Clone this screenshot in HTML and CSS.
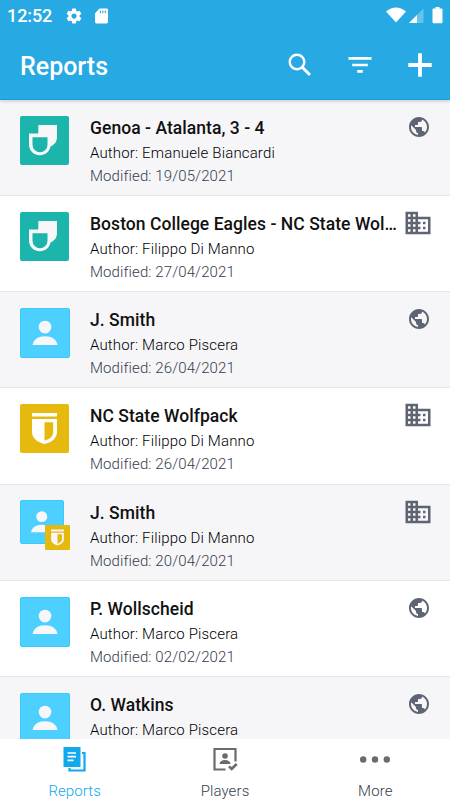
FILE: index.html
```html
<!DOCTYPE html>
<html lang="en">
<head>
    <meta charset="UTF-8">
    <meta name="viewport" content="width=device-width, initial-scale=1.0">
    <title>Reports</title>
    <link rel="stylesheet" href="styles.css">
</head>
<body>
    <!-- shared icons -->
    <svg class="sprite">
        <symbol id="team" viewBox="0 0 49 49">
            <path fill="currentColor" d="M18.300 9H37V21c0 4.500-2 7.500-6.500 9.500-1 5-5 8.700-10.700 8.700C13.500 39.200 9 34.500 9 28.500V17.500h9.300z"/>
            <path fill="#1bb5ab" d="M12.500 21.200H27.500v7.500a7.500 7.500 0 0 1-15 0z"/>
        </symbol>
        <symbol id="person" viewBox="0 0 50 50">
            <circle cx="25" cy="18.800" r="6.600" fill="currentColor"/>
            <path fill="currentColor" d="M12 37.500c1-5.500 6-9 13-9s12 3.500 13 9z"/>
        </symbol>
        <symbol id="shield" viewBox="0 0 49 49">
            <path fill="currentColor" d="M12 9h25v3.500H12zM12 15h25v13c0 6-5.500 10.500-12.500 12C17.500 38.500 12 34 12 28z"/>
            <path fill="#e6b90f" d="M24.500 18.200h8.700V28c0 4.300-3.500 7.300-8.700 8.700z"/>
        </symbol>
        <symbol id="globe" viewBox="0 0 24 24">
            <path fill="currentColor" d="M12 2C6.480 2 2 6.480 2 12s4.480 10 10 10 10-4.480 10-10S17.520 2 12 2zm-1 17.930c-3.950-.49-7-3.850-7-7.930 0-.62.080-1.210.21-1.790L9 15v1c0 1.100.9 2 2 2v1.930zm6.900-2.540c-.26-.81-1-1.390-1.900-1.390h-1v-3c0-.55-.45-1-1-1H8v-2h2c.55 0 1-.45 1-1V7h2c1.100 0 2-.9 2-2v-.41c2.930 1.190 5 4.060 5 7.410 0 2.080-.8 3.970-2.100 5.390z"/>
        </symbol>
        <symbol id="company" viewBox="0 0 24 24">
            <path fill="currentColor" d="M12 7V3H2v18h20V7H12zM6 19H4v-2h2v2zm0-4H4v-2h2v2zm0-4H4V9h2v2zm0-4H4V5h2v2zm4 12H8v-2h2v2zm0-4H8v-2h2v2zm0-4H8V9h2v2zm0-4H8V5h2v2zm10 12h-8v-2h2v-2h-2v-2h2v-2h-2V9h8v10zm-2-8h-2v2h2v-2zm0 4h-2v2h2v-2z"/>
        </symbol>
    </svg>

    <div class="app">
        <header class="header">
            <div class="status">
                <span class="time">12:52</span>
                <svg class="gear" viewBox="0 0 24 24"><path fill="#fff" d="M19.430 12.980c.04-.32.070-.64.070-.98s-.03-.66-.07-.98l2.110-1.650c.19-.15.240-.42.120-.64l-2-3.460c-.12-.22-.39-.3-.61-.22l-2.490 1c-.52-.4-1.080-.73-1.690-.98l-.38-2.650C14.460 2.180 14.250 2 14 2h-4c-.25 0-.46.180-.49.420l-.38 2.650c-.61.250-1.170.590-1.690.98l-2.490-1c-.23-.09-.49 0-.61.220l-2 3.460c-.13.220-.07.490.12.640l2.110 1.650c-.04.320-.07.650-.07.980s.03.660.070.980l-2.110 1.650c-.19.150-.24.420-.12.640l2 3.460c.12.220.390.300.610.220l2.490-1c.52.400 1.080.730 1.690.980l.38 2.650c.03.240.240.420.490.420h4c.25 0 .46-.18.490-.42l.38-2.650c.61-.25 1.170-.59 1.690-.98l2.490 1c.23.090.490 0 .61-.22l2-3.460c.12-.22.070-.49-.12-.64l-2.110-1.650zM12 15.500c-1.930 0-3.500-1.570-3.500-3.500s1.570-3.500 3.500-3.500 3.500 1.570 3.500 3.500-1.570 3.500-3.500 3.500z"/></svg>
                <svg class="sd" viewBox="0 0 14 16"><path fill="#fff" d="M5 0h7.500Q14 0 14 1.500v13q0 1.500-1.500 1.500h-11Q0 16 0 14.500V5z"/><path stroke="#27a9e3" stroke-width="1.200" d="M5.700 2v3M8.400 2v3M11.100 2v3"/></svg>
                <svg class="signals" viewBox="0 0 57 17">
                    <path fill="#fff" d="M0 4.500Q10 -3.500 20 4.500L10 15.500z"/>
                    <path fill="#fff" opacity=".3" d="M37.500 1.500V16H23z"/>
                    <path fill="#fff" d="M31 8v8h-8z"/>
                    <path fill="#fff" d="M49.500 0h4v1.500h2q1 0 1 1V15q0 1.300-1 1.300h-8q-1 0-1-1.300V2.500q0-1 1-1h2z"/>
                </svg>
            </div>
            <div class="toolbar">
                <h1>Reports</h1>
                <svg class="tool" viewBox="0 0 30 30"><circle cx="12" cy="12" r="7.300" fill="none" stroke="#fff" stroke-width="2.400"/><path stroke="#fff" stroke-width="3" d="M17 17l8 8"/></svg>
                <svg class="tool" viewBox="0 0 30 30"><path fill="#fff" d="M3.500 7h23v2.700h-23zM7.200 13.700h15.600v2.600H7.200zM12.200 20h5.600v2.700h-5.600z"/></svg>
                <svg class="tool" viewBox="0 0 30 30"><path stroke="#fff" stroke-width="3.800" d="M15 3.300v23.400M3.300 15h23.400"/></svg>
            </div>
        </header>

        <main class="list">
            <div class="row">
                <div class="avatar team"><svg><use href="#team"/></svg></div>
                <div class="info">
                    <h2>Genoa - Atalanta, 3 - 4</h2>
                    <p>Author: Emanuele Biancardi</p>
                    <p class="date">Modified: 19/05/2021</p>
                </div>
                <svg class="scope globe"><use href="#globe"/></svg>
            </div>
            <div class="row">
                <div class="avatar team"><svg><use href="#team"/></svg></div>
                <div class="info">
                    <h2>Boston College Eagles - NC State Wol…</h2>
                    <p>Author: Filippo Di Manno</p>
                    <p class="date">Modified: 27/04/2021</p>
                </div>
                <svg class="scope company"><use href="#company"/></svg>
            </div>
            <div class="row">
                <div class="avatar player"><svg><use href="#person"/></svg></div>
                <div class="info">
                    <h2>J. Smith</h2>
                    <p>Author: Marco Piscera</p>
                    <p class="date">Modified: 26/04/2021</p>
                </div>
                <svg class="scope globe"><use href="#globe"/></svg>
            </div>
            <div class="row">
                <div class="avatar club"><svg><use href="#shield"/></svg></div>
                <div class="info">
                    <h2>NC State Wolfpack</h2>
                    <p>Author: Filippo Di Manno</p>
                    <p class="date">Modified: 26/04/2021</p>
                </div>
                <svg class="scope company"><use href="#company"/></svg>
            </div>
            <div class="row">
                <div class="avatar player small">
                    <svg><use href="#person"/></svg>
                    <div class="badge"><svg><use href="#shield"/></svg></div>
                </div>
                <div class="info">
                    <h2>J. Smith</h2>
                    <p>Author: Filippo Di Manno</p>
                    <p class="date">Modified: 20/04/2021</p>
                </div>
                <svg class="scope company"><use href="#company"/></svg>
            </div>
            <div class="row">
                <div class="avatar player"><svg><use href="#person"/></svg></div>
                <div class="info">
                    <h2>P. Wollscheid</h2>
                    <p>Author: Marco Piscera</p>
                    <p class="date">Modified: 02/02/2021</p>
                </div>
                <svg class="scope globe"><use href="#globe"/></svg>
            </div>
            <div class="row">
                <div class="avatar player"><svg><use href="#person"/></svg></div>
                <div class="info">
                    <h2>O. Watkins</h2>
                    <p>Author: Marco Piscera</p>
                </div>
                <svg class="scope globe"><use href="#globe"/></svg>
            </div>
        </main>

        <nav class="tabs">
            <a class="tab active">
                <svg viewBox="0 0 30 30"><path fill="currentColor" d="M3.500 3H20.500v20H3.500z"/><path fill="none" stroke="currentColor" stroke-width="2.200" d="M22 9h2.500v17.500H9.500V24"/><path stroke="#fff" stroke-width="1.700" d="M7.500 9h8.500M7.500 12.700h8.500M7.500 16.400h6"/></svg>
                <span>Reports</span>
            </a>
            <a class="tab">
                <svg viewBox="0 0 30 30"><path fill="none" stroke="currentColor" stroke-width="2.200" d="M15.500 25.500H4.500V5h21v12.500"/><path fill="none" stroke="currentColor" stroke-width="2.600" d="M19 22.300l2.700 2.700 5-5"/><circle cx="15" cy="12" r="2.800" fill="currentColor"/><path fill="currentColor" d="M9.500 20c.5-3 2.500-4 5.500-4s5 1 5.500 4z"/></svg>
                <span>Players</span>
            </a>
            <a class="tab">
                <svg viewBox="0 0 30 30"><g fill="currentColor"><circle cx="3.200" cy="15.500" r="3.200"/><circle cx="15" cy="15.500" r="3.200"/><circle cx="26.800" cy="15.500" r="3.200"/></g></svg>
                <span>More</span>
            </a>
        </nav>
    </div>
</body>
</html>
```
FILE: styles.css
```css
* {
    box-sizing: border-box;
}

body {
    margin: 0;
    font-family: Roboto, sans-serif;
    background: #fff;
}

h1, h2, p {
    margin: 0;
}

svg {
    display: block;
    flex: none;
}

.sprite {
    display: none;
}

.app {
    height: 800px;
    display: flex;
    flex-direction: column;
    overflow: hidden;
}

.header {
    flex: none;
    height: 99.500px;
    background: #27a9e3;
    border-bottom: 1px solid #159fd6;
    color: #fff;
    box-shadow: 0 1px 4px rgba(0, 0, 0, 0.2);
    z-index: 1;
}

.status {
    display: flex;
    align-items: center;
    height: 31px;
    padding: 0 8px 0 7px;
}

.time {
    width: 58px;
    font-size: 18px;
    font-weight: 500;
    letter-spacing: -0.1px;
}

.gear {
    width: 18px;
    height: 18px;
}

.sd {
    width: 13px;
    height: 16px;
    margin-left: 12px;
}

.signals {
    width: 57px;
    height: 17px;
    margin-left: auto;
    margin-right: -1px;
}

.toolbar {
    display: flex;
    align-items: center;
    gap: 30px;
    height: 68px;
    padding: 0 15px 0 20px;
}

.toolbar h1 {
    flex: 1;
    padding-top: 2px;
    font-size: 25px;
    font-weight: 500;
}

.tool {
    width: 30px;
    height: 30px;
}

.list {
    flex: 1;
    overflow: hidden;
}

.row {
    display: flex;
    height: 96.300px;
    padding: 16px 20px 0;
    border-bottom: 1px solid #e6e6e8;
}

.row:nth-child(odd) {
    background: #f6f6f9;
}

.avatar {
    flex: none;
    position: relative;
    width: 49px;
    height: 49px;
    border-radius: 2px;
    color: #f7f7fa;
}

.avatar svg {
    width: 100%;
    height: 100%;
}

.avatar.team {
    background: #1bb5ab;
}

.avatar.club {
    background: #e6b90f;
    color: #fff;
}

.avatar.player {
    width: 50px;
    height: 50px;
    background: #4dd0ff;
    border: 1px solid #35ccf8;
}

.avatar.small {
    width: 43.500px;
    height: 43.500px;
    margin-top: -0.500px;
}

.badge {
    position: absolute;
    left: 24px;
    top: 24px;
    width: 25px;
    height: 25px;
    border-radius: 1px;
    background: #e6b90f;
}

.info {
    flex: none;
    width: 310px;
    margin-left: 21px;
}

.avatar.player + .info {
    margin-left: 20px;
}

.avatar.small + .info {
    margin-left: 26.500px;
}

.info h2 {
    margin-bottom: 2px;
    font-size: 17.500px;
    font-weight: 500;
    line-height: 24px;
    letter-spacing: 0.050px;
    color: #111;
    white-space: nowrap;
}

.info p {
    font-size: 15px;
    line-height: 23px;
    font-weight: 300;
    color: #000;
    letter-spacing: 0.150px;
}

.info .date {
    color: #353d4e;
    letter-spacing: 0.100px;
}

.scope {
    margin-left: auto;
    color: #5f6472;
}

.scope.globe {
    width: 24px;
    height: 24px;
    margin-top: -1px;
    margin-right: -1px;
}

.scope.company {
    width: 30px;
    height: 30px;
    margin-top: -4px;
    margin-right: -2.500px;
}

.tabs {
    flex: none;
    display: flex;
    gap: 1px;
    height: 61px;
    background: #fff;
}

.tab {
    flex: 1;
    display: flex;
    flex-direction: column;
    align-items: center;
    padding-top: 5px;
    font-size: 15px;
    font-weight: 300;
    letter-spacing: 0.100px;
    color: #353d4e;
}

.tab svg {
    width: 30px;
    height: 30px;
    color: #6b6b6b;
}

.tab span {
    margin-top: 8px;
}

.tab.active, .tab.active svg {
    color: #0fa9ec;
}
```
